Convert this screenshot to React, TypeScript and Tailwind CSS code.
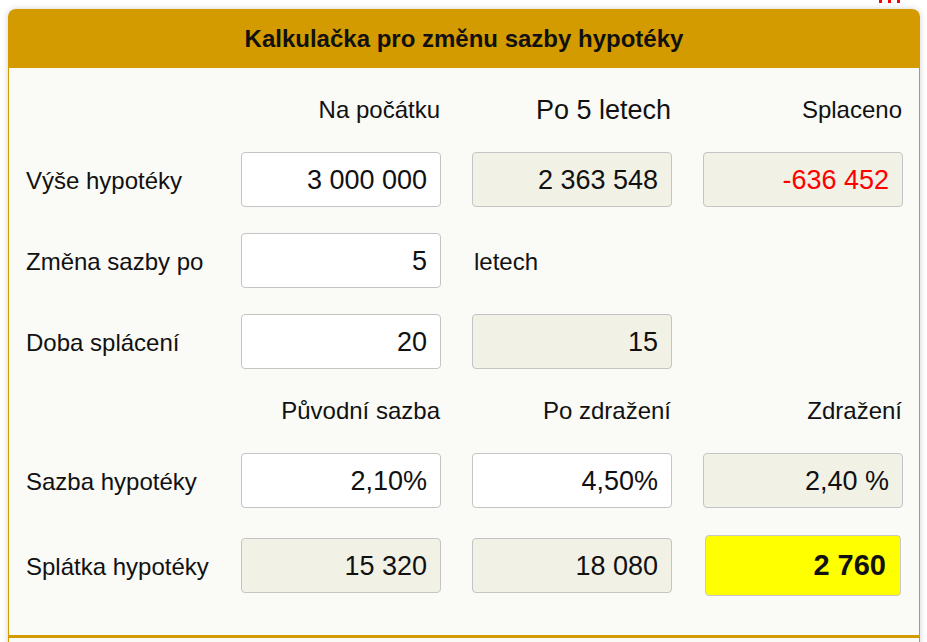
import React from "react";

type Cell = {
  value: string;
  kind: "input" | "output" | "result" | "text" | "empty";
  red?: boolean;
};

type Row = {
  label: string;
  cells: Cell[];
};

const font = { fontFamily: '"Liberation Sans", Arial, sans-serif' };

const Box: React.FC<{ cell: Cell }> = ({ cell }) => {
  if (cell.kind === "empty") return <div />;
  if (cell.kind === "text") {
    return (
      <div className="flex items-center pl-[2px] pt-[2px] text-[24px] text-[#111]">{cell.value}</div>
    );
  }
  if (cell.kind === "result") {
    return (
      <div className="mx-[2px] flex h-[61px] items-center justify-end rounded-[4px] border border-[#c8c8c8] bg-[#ffff00] pr-[14px] pt-[1px] text-[29px] font-bold text-[#111]">
        {cell.value}
      </div>
    );
  }
  const bg = cell.kind === "input" ? "bg-white" : "bg-[#f1f1e6]";
  return (
    <div className="flex items-center">
      <div
        className={`flex h-[55px] w-full items-center justify-end rounded-[4px] border border-[#c4c4c4] pr-[13px] pt-[1px] text-[27px] ${bg} ${
          cell.red ? "text-[#ff0000]" : "text-[#111]"
        }`}
      >
        {cell.value}
      </div>
    </div>
  );
};

const grid = "grid grid-cols-[184px_200px_200px_200px] gap-x-[31px]";

const DataRow: React.FC<{ row: Row; className?: string }> = ({ row, className }) => (
  <div className={`${grid} ${className ?? ""}`}>
    <div className="flex items-center whitespace-nowrap pt-[2px] text-[24px] text-[#111]">{row.label}</div>
    {row.cells.map((c, i) => (
      <Box key={i} cell={c} />
    ))}
  </div>
);

const App: React.FC = () => {
  return (
    <div className="min-h-[642px] overflow-hidden bg-white" style={font}>
      <div className="relative ml-[8px] mt-[9px] w-[912px] rounded-t-[8px] shadow-[0_0_6px_rgba(0,0,0,0.18)]">
        <div className="absolute right-[20px] top-[-9px] flex gap-[6px]">
          <span className="h-[3px] w-[3px] bg-[#ff0000]" />
          <span className="h-[3px] w-[3px] bg-[#ff0000]" />
          <span className="h-[3px] w-[3px] bg-[#ff0000]" />
        </div>
        <div className="flex h-[59px] items-center justify-center rounded-t-[8px] bg-[#d49b00] text-[24px] font-bold text-[#111]">
          Kalkulačka pro změnu sazby hypotéky
        </div>
        <div className="border-x border-[#d49b00] bg-[#fafaf6] pl-[17px] pt-[22px] pb-[39px]">
          <div className={`${grid} h-[40px] items-center text-[#111]`}>
            <div />
            <div className="pr-[1px] text-right text-[24px]">Na počátku</div>
            <div className="pr-[1px] text-right text-[27px]">Po 5 letech</div>
            <div className="pr-[1px] text-right text-[24px]">Splaceno</div>
          </div>
          <DataRow
            className="mt-[22px]"
            row={{
              label: "Výše hypotéky",
              cells: [
                { value: "3 000 000", kind: "input" },
                { value: "2 363 548", kind: "output" },
                { value: "-636 452", kind: "output", red: true },
              ],
            }}
          />
          <DataRow
            className="mt-[26px]"
            row={{
              label: "Změna sazby po",
              cells: [
                { value: "5", kind: "input" },
                { value: "letech", kind: "text" },
                { value: "", kind: "empty" },
              ],
            }}
          />
          <DataRow
            className="mt-[26px]"
            row={{
              label: "Doba splácení",
              cells: [
                { value: "20", kind: "input" },
                { value: "15", kind: "output" },
                { value: "", kind: "empty" },
              ],
            }}
          />
          <div className={`${grid} mt-[22px] h-[40px] items-center text-[24px] text-[#111]`}>
            <div />
            <div className="pr-[1px] text-right">Původní sazba</div>
            <div className="pr-[1px] text-right">Po zdražení</div>
            <div className="pr-[1px] text-right">Zdražení</div>
          </div>
          <DataRow
            className="mt-[22px]"
            row={{
              label: "Sazba hypotéky",
              cells: [
                { value: "2,10%", kind: "input" },
                { value: "4,50%", kind: "input" },
                { value: "2,40 %", kind: "output" },
              ],
            }}
          />
          <DataRow
            className="mt-[27px] h-[61px]"
            row={{
              label: "Splátka hypotéky",
              cells: [
                { value: "15 320", kind: "output" },
                { value: "18 080", kind: "output" },
                { value: "2 760", kind: "result" },
              ],
            }}
          />
        </div>
        <div className="h-[3px] bg-[#d49b00]" />
        <div className="h-[20px] border-x border-[#d49b00] bg-[#fafaf6]" />
      </div>
    </div>
  );
};

export default App;
